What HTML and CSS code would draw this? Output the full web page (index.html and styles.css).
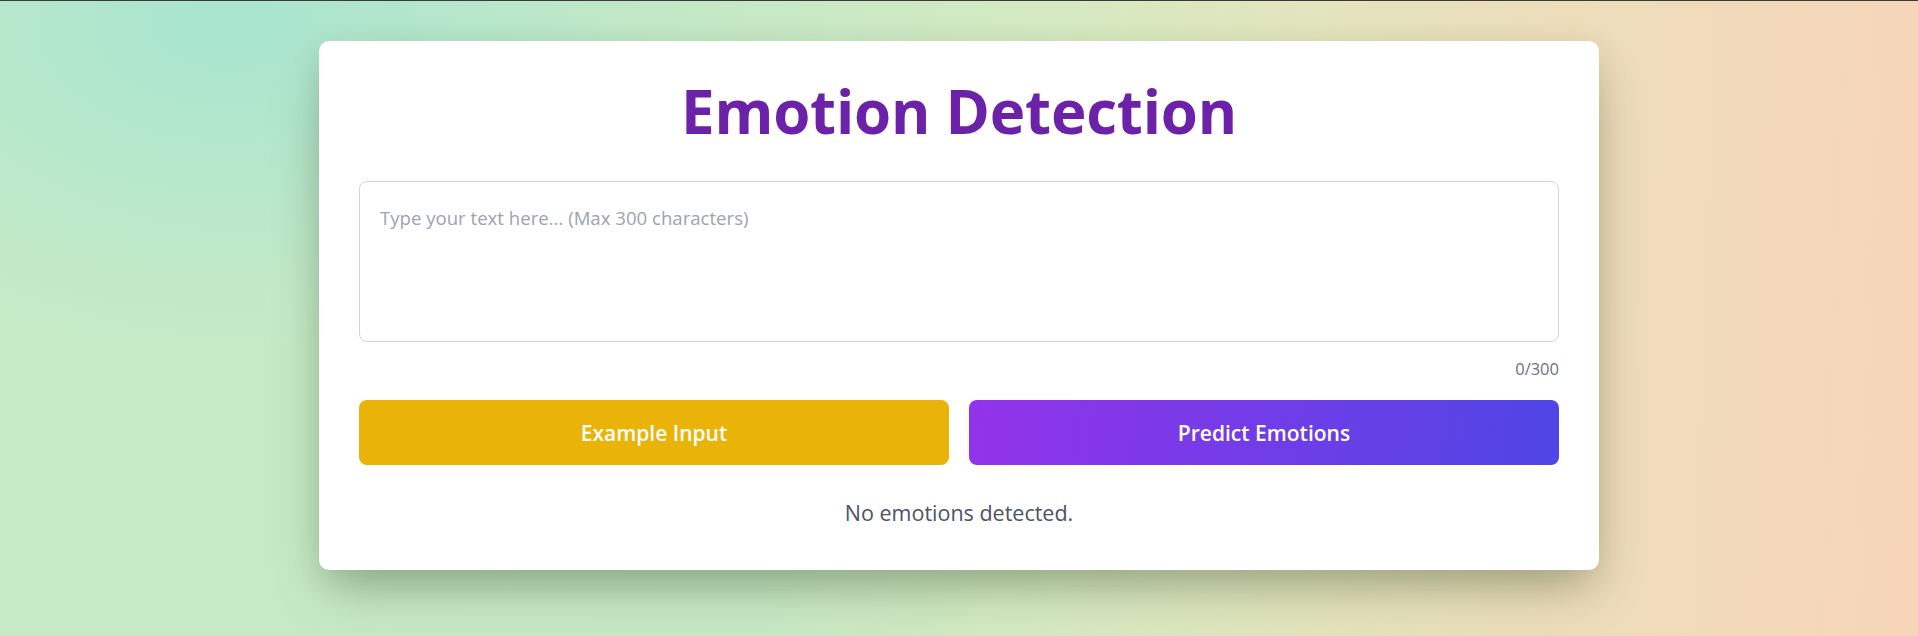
FILE: index.html
```html
<!DOCTYPE html>
<html lang="en">
<head>
<meta charset="utf-8">
<title>Emotion Detection</title>
<link rel="stylesheet" href="styles.css">
</head>
<body>
<div class="topline"></div>
<main class="page">
  <section class="card">
    <h1 class="title">Emotion Detection</h1>
    <textarea class="input" placeholder="Type your text here... (Max 300 characters)" maxlength="300"></textarea>
    <div class="counter">0/300</div>
    <div class="actions">
      <button class="btn btn-example" type="button">Example Input</button>
      <button class="btn btn-predict" type="button">Predict Emotions</button>
    </div>
    <p class="result">No emotions detected.</p>
  </section>
</main>
</body>
</html>
```

FILE: styles.css
```css
* { box-sizing: border-box; }
html, body { margin: 0; padding: 0; }
body {
  height: 636px;
  overflow: hidden;
  font-family: "Open Sans", "Noto Sans", sans-serif;
  background:
    radial-gradient(ellipse 520px 330px at 230px 20px, rgba(166, 229, 208, 0.95) 0%, rgba(166, 229, 208, 0.5) 45%, rgba(166, 229, 208, 0) 100%),
    linear-gradient(92deg, #c6eac6 0%, #c7e9c5 40%, #d6eac1 55%, #e3e5bd 68%, #ecdeba 80%, #f7d5b8 100%);
}
.topline { height: 1px; background: #3a3a3a; }
.page {
  display: flex;
  justify-content: center;
  padding-top: 40px;
}
.card {
  width: 1280px;
  background: #fff;
  border-radius: 10px;
  padding: 40px 40px 42px;
  box-shadow: 0 25px 50px -12px rgba(40, 60, 30, 0.35), 0 10px 30px rgba(60, 80, 40, 0.12);
  display: flex;
  flex-direction: column;
}
.title {
  margin: 0 0 40px;
  text-align: center;
  font-size: 60px;
  line-height: 60px;
  font-weight: 700;
  letter-spacing: -0.2px;
  color: #6b21a8;
}
.input {
  display: block;
  width: 100%;
  height: 161px;
  resize: none;
  border: 1px solid #d1d5db;
  border-radius: 8px;
  padding: 22px 20px 20px;
  font-family: inherit;
  font-size: 18.6px;
  line-height: 28px;
  color: #1f2937;
  outline: none;
}
.input::placeholder { color: #9ca3af; }
.counter {
  margin-top: 15px;
  text-align: right;
  font-size: 16.5px;
  line-height: 24px;
  color: #6b7280;
}
.actions {
  margin-top: 19px;
  display: grid;
  grid-template-columns: 1fr 1fr;
  gap: 20px;
}
.btn {
  border: 0;
  border-radius: 8px;
  height: 65px;
  font-family: inherit;
  font-size: 21px;
  font-weight: 600;
  color: #fff;
  cursor: pointer;
}
.btn-example { background: #eab308; }
.btn-predict { background: linear-gradient(100deg, #9333ea 0%, #4f46e5 100%); }
.result {
  margin: 33px 0 0;
  text-align: center;
  font-size: 21.5px;
  line-height: 30px;
  color: #4b5563;
}
```
